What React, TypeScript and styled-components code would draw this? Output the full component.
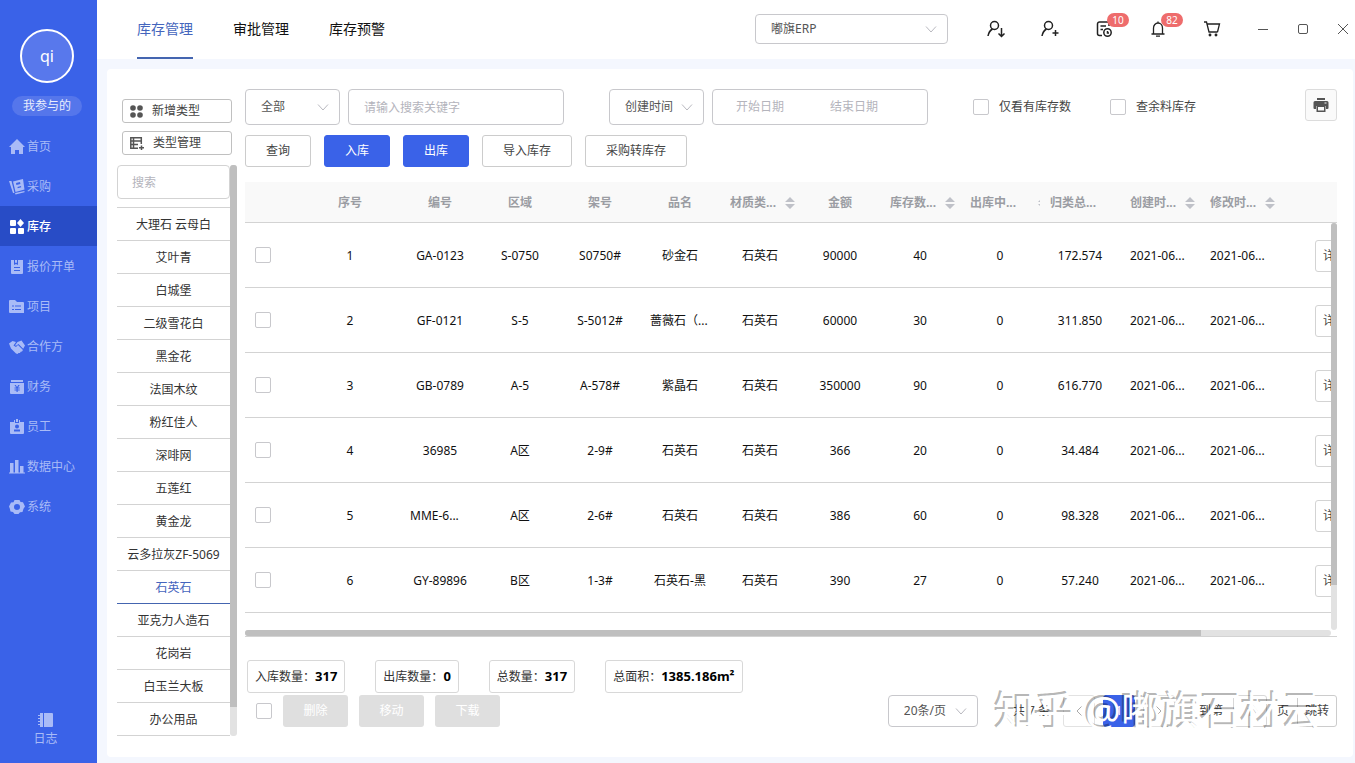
import React from "react";
import styled, { createGlobalStyle } from "styled-components";

const BLUE = "#3a62e8";
const LINE = "#d3d3d3";

const GlobalStyle = createGlobalStyle`
  *, *::before, *::after { box-sizing: border-box; }
  body {
    margin: 0;
    background: #f4f7fe;
    color: #333;
    font-family: "Noto Sans", "Noto Sans CJK SC", sans-serif;
    font-size: 12px;
    line-height: 16px;
  }
  button, input, select { font: inherit; color: inherit; margin: 0; }
  button { cursor: pointer; padding: 0; white-space: nowrap; }
  a { color: inherit; text-decoration: none; }
`;

/* ---------- frame ---------- */

const Shell = styled.div`
  display: flex;
  min-height: 100vh;
`;

const Sidebar = styled.aside`
  flex: 0 0 97px;
  display: flex;
  flex-direction: column;
  background: ${BLUE};
  color: #a9bbf7;
  padding: 29px 0 16px;
`;

const Avatar = styled.div`
  width: 54px;
  height: 54px;
  margin: 0 0 0 20px;
  border: 2px solid #fff;
  border-radius: 50%;
  background: #5878ec;
  color: #fff;
  font-size: 16px;
  display: flex;
  align-items: center;
  justify-content: center;
`;

const Pill = styled.button`
  width: 70px;
  height: 20px;
  margin: 13px 0 10px 12px;
  border: 0;
  border-radius: 10px;
  background: #5576eb;
  color: #e8edfd;
`;

const NavLink = styled.a<{ $active?: boolean }>`
  display: flex;
  align-items: center;
  gap: 2px;
  height: 40px;
  padding: 2px 0 0 9px;
  color: ${(p) => (p.$active ? "#fff" : "inherit")};
  background: ${(p) => (p.$active ? "#284cc6" : "transparent")};
  font-weight: ${(p) => (p.$active ? 500 : 400)};
`;

const LogLink = styled.a`
  display: flex;
  flex-direction: column;
  align-items: center;
  gap: 3px;
  margin-top: auto;
  padding-right: 6px;
`;

const Main = styled.div`
  flex: 1;
  min-width: 0;
  display: flex;
  flex-direction: column;
`;

const Header = styled.header`
  display: flex;
  align-items: center;
  justify-content: space-between;
  height: 59px;
  padding: 0 4px 0 40px;
  background: #fff;
`;

const Tabs = styled.nav`
  display: flex;
  align-self: stretch;
  gap: 40px;
`;

const Tab = styled.a<{ $active?: boolean }>`
  display: flex;
  align-items: center;
  font-size: 14px;
  color: ${(p) => (p.$active ? "#4465bd" : "#111")};
  border-bottom: 2px solid ${(p) => (p.$active ? "#4465b0" : "transparent")};
`;

const HeaderTools = styled.div`
  display: flex;
  align-items: center;
  padding-bottom: 2px;
`;

const SelectWrap = styled.span<{ $w: number; $h: number }>`
  position: relative;
  display: block;
  flex: none;
  width: ${(p) => p.$w}px;
  height: ${(p) => p.$h}px;
  svg {
    position: absolute;
    right: 11px;
    top: 50%;
    margin-top: -3px;
    pointer-events: none;
  }
`;

const NativeSelect = styled.select`
  appearance: none;
  width: 100%;
  height: 100%;
  padding: 0 16px 0 15px;
  border: 1px solid #c8c8cc;
  border-radius: 4px;
  background: #fff;
  color: #555;
`;

const HeaderIcons = styled.div`
  display: flex;
  gap: 30px;
  margin: 0 31px 0 36px;
`;

const IconButton = styled.button`
  position: relative;
  display: flex;
  align-items: center;
  justify-content: center;
  width: 24px;
  height: 24px;
  border: 0;
  background: none;
  color: #222;
`;

const WindowButton = styled(IconButton)`
  width: 16px;
  color: #555;
`;

const Badge = styled.span`
  position: absolute;
  left: 15px;
  top: -4px;
  width: 22px;
  height: 14px;
  border-radius: 7px;
  background: #ee6c6c;
  color: #fff;
  font-size: 10px;
  line-height: 14px;
  text-align: center;
`;

const WindowControls = styled.div`
  display: flex;
  gap: 24px;
`;

const Panel = styled.main`
  position: relative;
  flex: 1;
  display: flex;
  gap: 8px;
  margin: 10px 2px 6px 10px;
  padding: 20px 16px 21px 10px;
  border-radius: 4px;
  background: #fff;
`;

/* ---------- category column ---------- */

const Categories = styled.section`
  flex: 0 0 120px;
  display: flex;
  flex-direction: column;
  padding-top: 10px;
`;

const TypeButton = styled.button`
  display: flex;
  align-items: center;
  gap: 9px;
  width: 110px;
  height: 24px;
  margin: 0 0 8px 5px;
  padding-left: 7px;
  border: 1px solid #c0c0c0;
  border-radius: 3px;
  background: #fff;
  color: #444;
`;

const CategoryScroll = styled.div`
  display: flex;
  margin-top: 2px;
`;

const CategoryBody = styled.div`
  flex: 1;
  min-width: 0;
`;

const CategorySearch = styled.input`
  display: block;
  width: 100%;
  height: 34px;
  margin-bottom: 8px;
  padding: 0 14px;
  border: 1px solid ${LINE};
  border-radius: 4px;
  &::placeholder { color: #b4b4bc; opacity: 1; }
`;

const CategoryList = styled.ul`
  list-style: none;
  margin: 0;
  padding: 0;
  border-top: 1px solid ${LINE};
`;

const CategoryItem = styled.li<{ $active?: boolean }>`
  height: 33px;
  border-bottom: 1px solid ${(p) => (p.$active ? "#4465b0" : LINE)};
  color: ${(p) => (p.$active ? "#4465bd" : "#333")};
  text-align: center;
  line-height: 34px;
  white-space: nowrap;
`;

const Rail = styled.div`
  width: 7px;
  border-radius: 3px;
  background: #e2e2e2;
`;

const Thumb = styled.div<{ $size: string; $horizontal?: boolean }>`
  width: ${(p) => (p.$horizontal ? p.$size : "100%")};
  height: ${(p) => (p.$horizontal ? "100%" : p.$size)};
  border-radius: ${(p) => (p.$horizontal ? "3px 0 0 3px" : "3px 3px 0 0")};
  background: #bfbfbf;
`;

/* ---------- content column ---------- */

const Content = styled.section`
  flex: 1;
  min-width: 0;
`;

const Filters = styled.div`
  display: flex;
  align-items: center;
  height: 36px;
`;

const SearchBox = styled.input`
  width: 216px;
  height: 36px;
  margin: 0 45px 0 8px;
  padding: 0 15px;
  border: 1px solid #c8c8cc;
  border-radius: 4px;
  &::placeholder { color: #b4b4bc; opacity: 1; }
`;

const DateRange = styled.div`
  display: flex;
  align-items: center;
  width: 216px;
  height: 36px;
  margin: 0 45px 0 8px;
  padding-left: 23px;
  border: 1px solid #c8c8cc;
  border-radius: 4px;
`;

const DateInput = styled.input`
  width: 94px;
  padding: 0;
  border: 0;
  outline: 0;
  background: none;
  &::placeholder { color: #b4b4bc; opacity: 1; }
`;

const CheckLabel = styled.label`
  display: flex;
  align-items: center;
  gap: 10px;
  margin-right: 39px;
  color: #444;
`;

const Check = styled.input.attrs({ type: "checkbox" })`
  appearance: none;
  display: block;
  flex: none;
  width: 16px;
  height: 16px;
  border: 1px solid #c8c8cc;
  border-radius: 2px;
  background: #fff;
`;

const PrintButton = styled.button`
  display: flex;
  align-items: center;
  justify-content: center;
  align-self: flex-start;
  width: 32px;
  height: 32px;
  margin-left: auto;
  border: 1px solid #dcdcdc;
  border-radius: 3px;
  background: #fafafa;
  color: #555;
`;

const Actions = styled.div`
  display: flex;
  gap: 13px;
  margin: 10px 0 15px;
`;

const Button = styled.button<{ $primary?: boolean }>`
  height: 32px;
  padding: 0 20px;
  border: 1px solid ${(p) => (p.$primary ? BLUE : "#ccc")};
  border-radius: 3px;
  background: ${(p) => (p.$primary ? BLUE : "#fff")};
  color: ${(p) => (p.$primary ? "#fff" : "#444")};
`;

const TableBox = styled.div`
  position: relative;
  height: 455px;
  border-bottom: 1px solid ${LINE};
  overflow: hidden;
`;

const Table = styled.table`
  width: 1236px;
  table-layout: fixed;
  border-collapse: separate;
  border-spacing: 0;
`;

const Th = styled.th<{ $left?: boolean }>`
  position: relative;
  height: 41px;
  padding: 2px 10px 0;
  border-bottom: 1px solid ${LINE};
  background: #f9f9f9;
  color: #9b9da3;
  font-weight: 700;
  text-align: ${(p) => (p.$left ? "left" : "center")};
  white-space: nowrap;
`;

const Td = styled.td<{ $left?: boolean }>`
  height: 65px;
  padding: 2px 10px 0;
  border-bottom: 1px solid ${LINE};
  color: #111;
  text-align: ${(p) => (p.$left ? "left" : "center")};
  white-space: nowrap;
`;

const CheckTd = styled(Td)`
  padding-top: 0;
`;

const DetailTd = styled(Td)`
  padding-left: 35px;
  text-align: left;
`;

const DetailButton = styled.button`
  height: 32px;
  padding: 0 7px;
  border: 1px solid ${LINE};
  border-radius: 3px;
  background: #fff;
  color: #444;
`;

const Caret = styled.span<{ $clipped?: boolean }>`
  position: absolute;
  right: ${(p) => (p.$clipped ? 0 : 5)}px;
  top: 15px;
  width: ${(p) => (p.$clipped ? 2 : 10)}px;
  height: 12px;
  overflow: hidden;
  svg { display: block; }
`;

const VRail = styled(Rail)`
  position: absolute;
  right: 0;
  top: 41px;
  bottom: 6px;
  width: 6px;
`;

const HRail = styled(Rail)`
  position: absolute;
  left: 0;
  right: 6px;
  bottom: 0;
  width: auto;
  height: 6px;
`;

const Stats = styled.div`
  display: flex;
  gap: 30px;
  margin: 23px 0 0 2px;
`;

const Stat = styled.div`
  height: 33px;
  padding: 0 7px;
  border: 1px solid #d8d8d8;
  border-radius: 3px;
  line-height: 31px;
  white-space: nowrap;
  b { color: #000; font-size: 13px; }
`;

const Footer = styled.div`
  display: flex;
  align-items: center;
  gap: 11px;
  margin-top: 2px;
  padding-left: 11px;
`;

const DisabledButton = styled.button`
  width: 65px;
  height: 32px;
  border: 0;
  border-radius: 3px;
  background: #dfdfdf;
  color: #fff;
`;

const Pager = styled.div`
  display: flex;
  align-items: center;
  margin-left: auto;
  color: #444;
`;

const Total = styled.span`
  margin: 0 13px 0 35px;
`;

const PageButton = styled.button<{ $current?: boolean }>`
  display: flex;
  align-items: center;
  justify-content: center;
  width: 32px;
  height: 32px;
  margin-right: 8px;
  border: 1px solid ${(p) => (p.$current ? BLUE : "#e2e2e2")};
  border-radius: 3px;
  background: ${(p) => (p.$current ? BLUE : "#fff")};
  color: ${(p) => (p.$current ? "#fff" : "#aaa")};
`;

const JumpLabel = styled.label`
  display: flex;
  align-items: center;
  gap: 10px;
  margin-left: 16px;
`;

const JumpInput = styled.input`
  width: 34px;
  height: 32px;
  padding: 0;
  border: 1px solid #d8d8d8;
  border-radius: 3px;
  text-align: center;
`;

const JumpButton = styled.button`
  width: 40px;
  height: 32px;
  margin-left: 8px;
  border: 1px solid #ccc;
  border-radius: 3px;
  background: #fff;
`;

const Watermark = styled.div`
  position: absolute;
  right: 32px;
  bottom: 20px;
  color: #fff;
  font-size: 40px;
  line-height: 52px;
  white-space: nowrap;
  text-shadow: -2px -2px 0 rgba(0, 0, 0, 0.3);
  pointer-events: none;
`;

/* ---------- icons ---------- */

const NAV_ICONS: Record<string, React.ReactNode> = {
  home: <path d="M8 0 16 8h-2v7h-4v-4H6v4H2V8H0z" />,
  cart: (
    <>
      <path d="M0 2h2.500l3 12H4zM6 14l9.500-2v1.300L6.500 15.500z" />
      <path fillRule="evenodd" d="M4 2.500 14 0l1.500 10.500L6.500 13zM7 4l.4 2 4-1-.4-2zM8.500 8l.2 1.200 3.500-.9L12 7.100z" />
    </>
  ),
  stock: (
    <>
      <rect x="1" y="1" width="6" height="6" rx="1" />
      <rect x="1" y="9" width="6" height="6" rx="1" />
      <rect x="9" y="9" width="6" height="6" rx="1" />
      <path d="M11.500 0 15 4l-3.500 4L8 4z" />
    </>
  ),
  quote: (
    <path fillRule="evenodd" d="M2 1h3v5l2-1 2 1V1h5v13a1 1 0 0 1-1 1H3a1 1 0 0 1-1-1zM5 8v1h6V8zM5 11v1h6v-1zM6 1h2v3L7 3.500 6 4z" />
  ),
  project: (
    <path fillRule="evenodd" d="M1 1h5l2 2h6a1 1 0 0 1 1 1v10H1a1 1 0 0 1-1-1V2a1 1 0 0 1 1-1zM3 6.500v1h2v-1zM6 6.500v1h6v-1zM3 10v1h2v-1zM6 10v1h6v-1z" />
  ),
  partner: (
    <>
      <path d="M0 4.500 3.500 2 7 3 4.500 6.500 7 8l2-2 5 5-1 1.500-1.300.2-.7 1.200-1.500.1L8.500 15 7 14.500 2 9.500z" />
      <path d="M8.500 3 12.500 1.500 16 6.500l-1.800 3.300L9.500 5 7 6.800 6 6.200z" />
    </>
  ),
  finance: (
    <path fillRule="evenodd" d="M2 1h12v2H2zM1 4h14v10a1 1 0 0 1-1 1H2a1 1 0 0 1-1-1zM5.500 6l1.800 2.500H5.500v1h2v1h-2v1h2V13h1.200v-1.500h2v-1h-2v-1h2v-1H9L10.700 6H9.300L8 8 6.800 6z" />
  ),
  staff: (
    <path fillRule="evenodd" d="M1 3h4V1h1v3h4V1h1v2h4v11a1 1 0 0 1-1 1H2a1 1 0 0 1-1-1zM7 0h2v3H7zM8 5.500a2 2 0 1 0 0 4 2 2 0 0 0 0-4zM5 10.500V12.500h6v-2z" />
  ),
  data: (
    <>
      <rect x="1" y="4" width="3.500" height="10" />
      <rect x="6" y="1" width="3.500" height="13" />
      <rect x="11" y="7" width="3.500" height="7" />
      <rect x="0" y="13.500" width="16" height="1" />
    </>
  ),
  system: (
    <path fillRule="evenodd" d="M5.500 1h5l1 2 2.500.3L16 7.500l-1.500 2.200L13.500 13l-2.500.2L9.500 15h-4L4 13l-2.500-.5L.8 9.500 0 7.500 2 3.500l2.500-.3zM8 5a3 3 0 1 0 0 6 3 3 0 0 0 0-6z" />
  ),
  log: (
    <path fillRule="evenodd" d="M2 1h3v14H2v-2H0v-1h2v-2H0V9h2V7H0V6h2V4H0V3h2zM6 1h8a1 1 0 0 1 1 1v12a1 1 0 0 1-1 1H6z" />
  ),
};

const NavIcon = ({ name }: { name: string }) => (
  <svg width="16" height="16" viewBox="0 0 16 16" fill="currentColor" aria-hidden="true">
    {NAV_ICONS[name]}
  </svg>
);

const Line = ({ size = 20, w = 1.5, children }: { size?: number; w?: number; children: React.ReactNode }) => (
  <svg width={size} height={size} viewBox={`0 0 ${size} ${size}`} fill="none" stroke="currentColor" strokeWidth={w} aria-hidden="true">
    {children}
  </svg>
);

const Chevron = () => (
  <svg width="12" height="7" viewBox="0 0 12 7" fill="none" stroke="#b8b8bf" aria-hidden="true">
    <path d="M1 .5 6 6l5-5.500" />
  </svg>
);

const SortCaret = () => (
  <svg width="10" height="12" viewBox="0 0 10 12" fill="#bfc1c8" aria-hidden="true">
    <path d="M0 5 5 0l5 5zM0 7h10l-5 5z" />
  </svg>
);

/* ---------- data ---------- */

const NAV = [
  ["home", "首页"], ["cart", "采购"], ["stock", "库存"], ["quote", "报价开单"], ["project", "项目"],
  ["partner", "合作方"], ["finance", "财务"], ["staff", "员工"], ["data", "数据中心"], ["system", "系统"],
];

const CATEGORIES = [
  "大理石 云母白", "艾叶青", "白城堡", "二级雪花白", "黑金花", "法国木纹", "粉红佳人", "深啡网",
  "五莲红", "黄金龙", "云多拉灰ZF-5069", "石英石", "亚克力人造石", "花岗岩", "白玉兰大板", "办公用品",
];

const COLUMNS: { label: string; sort?: boolean; clipped?: boolean }[] = [
  { label: "序号" }, { label: "编号" }, { label: "区域" }, { label: "架号" }, { label: "品名" },
  { label: "材质类...", sort: true }, { label: "金额" }, { label: "库存数...", sort: true },
  { label: "出库中...", sort: true, clipped: true }, { label: "归类总..." },
  { label: "创建时...", sort: true }, { label: "修改时...", sort: true },
];

const DATE = "2021-06...";
const ROWS = [
  ["1", "GA-0123", "S-0750", "S0750#", "砂金石", "石英石", "90000", "40", "0", "172.574", DATE, DATE],
  ["2", "GF-0121", "S-5", "S-5012#", "蔷薇石（...", "石英石", "60000", "30", "0", "311.850", DATE, DATE],
  ["3", "GB-0789", "A-5", "A-578#", "紫晶石", "石英石", "350000", "90", "0", "616.770", DATE, DATE],
  ["4", "36985", "A区", "2-9#", "石英石", "石英石", "366", "20", "0", "34.484", DATE, DATE],
  ["5", "MME-6...", "A区", "2-6#", "石英石", "石英石", "386", "60", "0", "98.328", DATE, DATE],
  ["6", "GY-89896", "B区", "1-3#", "石英石-黑", "石英石", "390", "27", "0", "57.240", DATE, DATE],
];

const STATS = [["入库数量", "317"], ["出库数量", "0"], ["总数量", "317"], ["总面积", "1385.186m²"]];

const Select = ({ w, h, label, value }: { w: number; h: number; label: string; value: string }) => (
  <SelectWrap $w={w} $h={h}>
    <NativeSelect aria-label={label} defaultValue={value}>
      <option>{value}</option>
    </NativeSelect>
    <Chevron />
  </SelectWrap>
);

export default function App() {
  return (
    <Shell>
      <GlobalStyle />
      <Sidebar>
        <Avatar>qi</Avatar>
        <Pill>我参与的</Pill>
        <nav>
          {NAV.map(([icon, text]) => (
            <NavLink key={icon} href="#" $active={icon === "stock"}>
              <NavIcon name={icon} />
              {text}
            </NavLink>
          ))}
        </nav>
        <LogLink href="#">
          <NavIcon name="log" />
          日志
        </LogLink>
      </Sidebar>

      <Main>
        <Header>
          <Tabs>
            <Tab href="#" $active>库存管理</Tab>
            <Tab href="#">审批管理</Tab>
            <Tab href="#">库存预警</Tab>
          </Tabs>
          <HeaderTools>
            <Select w={193} h={30} label="公司" value="嘟旗ERP" />
            <HeaderIcons>
              <IconButton aria-label="转交">
                <Line>
                  <circle cx="8.500" cy="6.500" r="4" />
                  <path d="M6.500 10C4 11.500 2.500 14 2 17M15.500 9v8M12.500 14.500l3 3 3-3" />
                </Line>
              </IconButton>
              <IconButton aria-label="添加成员">
                <Line>
                  <circle cx="8.500" cy="6.500" r="4" />
                  <path d="M6.500 10C4 11.500 2.500 14 2 17M15.500 11v6M12.500 14h6" />
                </Line>
              </IconButton>
              <IconButton aria-label="待办">
                <Line>
                  <path d="M8 16.500H5.500a2 2 0 0 1-2-2V5a2 2 0 0 1 2-2H13a2 2 0 0 1 2 2v2M6.500 7H12M6.500 10.500H9" />
                  <circle cx="13.500" cy="13.500" r="3.700" />
                  <path d="M13.500 12v2H15" />
                </Line>
                <Badge>10</Badge>
              </IconButton>
              <IconButton aria-label="通知">
                <Line w={1.3}>
                  <path d="M5.500 14.500V9a4.500 5 0 0 1 9 0v5.500M3.500 15h13M10 4V2.500M8 17.200h4" />
                </Line>
                <Badge>82</Badge>
              </IconButton>
              <IconButton aria-label="购物车">
                <Line w={1.3}>
                  <path d="M2 3h2.500l2.500 10h8.500M5 5h12.500l-2 8" />
                  <circle cx="8" cy="16" r=".8" />
                  <circle cx="14" cy="16" r=".8" />
                </Line>
              </IconButton>
            </HeaderIcons>
            <WindowControls>
              <WindowButton aria-label="最小化">
                <Line size={12} w={1}><path d="M1 6.500h10" /></Line>
              </WindowButton>
              <WindowButton aria-label="最大化">
                <Line size={12} w={1}><rect x="1.500" y="1.500" width="9" height="9" rx="1.500" /></Line>
              </WindowButton>
              <WindowButton aria-label="关闭">
                <Line size={12} w={1}><path d="M1 1l10 10M11 1 1 11" /></Line>
              </WindowButton>
            </WindowControls>
          </HeaderTools>
        </Header>

        <Panel>
          <Categories>
            <TypeButton>
              <svg width="13" height="13" viewBox="0 0 13 13" fill="#555" aria-hidden="true">
                <circle cx="3" cy="3" r="2.800" /><circle cx="10" cy="3" r="2.800" />
                <circle cx="3" cy="10" r="2.800" /><circle cx="10" cy="10" r="2.800" />
              </svg>
              新增类型
            </TypeButton>
            <TypeButton>
              <svg width="14" height="13" viewBox="0 0 14 13" fill="none" stroke="#555" strokeWidth="1.500" aria-hidden="true">
                <path d="M8 11.200H.8V.8h10.500V7M3.500 1v10M1 4h10M1 7.500h7M11.500 8.500v4.500M9 10.700h5" />
              </svg>
              类型管理
            </TypeButton>
            <CategoryScroll>
              <CategoryBody>
                <CategorySearch placeholder="搜索" aria-label="搜索类型" />
                <CategoryList>
                  {CATEGORIES.map((c) => (
                    <CategoryItem key={c} $active={c === "石英石"}>{c}</CategoryItem>
                  ))}
                </CategoryList>
              </CategoryBody>
              <Rail><Thumb $size="95%" /></Rail>
            </CategoryScroll>
          </Categories>

          <Content>
            <Filters>
              <Select w={95} h={36} label="范围" value="全部" />
              <SearchBox placeholder="请输入搜索关键字" aria-label="关键字" />
              <Select w={95} h={36} label="时间类型" value="创建时间" />
              <DateRange>
                <DateInput placeholder="开始日期" aria-label="开始日期" />
                <DateInput placeholder="结束日期" aria-label="结束日期" />
              </DateRange>
              <CheckLabel><Check />仅看有库存数</CheckLabel>
              <CheckLabel><Check />查余料库存</CheckLabel>
              <PrintButton aria-label="打印">
                <svg width="16" height="16" viewBox="0 0 16 16" fill="currentColor" aria-hidden="true">
                  <path fillRule="evenodd" d="M4 1h8v2H4zM2 4h12a1.500 1.500 0 0 1 1.500 1.500V11a1 1 0 0 1-1 1H13V9H3v3H1.500a1 1 0 0 1-1-1V5.500A1.500 1.500 0 0 1 2 4zM11.500 5.500v1h2v-1z" />
                  <path fillRule="evenodd" d="M3.500 9h9v6h-9zM5 10v3.500h6V10z" />
                </svg>
              </PrintButton>
            </Filters>

            <Actions>
              <Button>查询</Button>
              <Button $primary>入库</Button>
              <Button $primary>出库</Button>
              <Button>导入库存</Button>
              <Button>采购转库存</Button>
            </Actions>

            <TableBox>
              <Table>
                <colgroup>
                  <col style={{ width: 55 }} />
                  {COLUMNS.map((c, i) => (
                    <col key={c.label} style={{ width: i === 0 ? 100 : 80 }} />
                  ))}
                  <col />
                </colgroup>
                <thead>
                  <tr>
                    <Th />
                    {COLUMNS.map((c) => (
                      <Th key={c.label} $left={c.label.endsWith("...")}>
                        {c.label}
                        {c.sort && <Caret $clipped={c.clipped}><SortCaret /></Caret>}
                      </Th>
                    ))}
                    <Th />
                  </tr>
                </thead>
                <tbody>
                  {ROWS.map((row) => (
                    <tr key={row[0]}>
                      <CheckTd><Check aria-label={`选择 ${row[1]}`} /></CheckTd>
                      {row.map((cell, i) => (
                        <Td key={i} $left={cell.endsWith("...")}>{cell}</Td>
                      ))}
                      <DetailTd><DetailButton>详情</DetailButton></DetailTd>
                    </tr>
                  ))}
                </tbody>
              </Table>
              <VRail><Thumb $size="89%" /></VRail>
              <HRail><Thumb $horizontal $size="88%" /></HRail>
            </TableBox>

            <Stats>
              {STATS.map(([k, v]) => (
                <Stat key={k}>{k}：<b>{v}</b></Stat>
              ))}
            </Stats>

            <Footer>
              <Check aria-label="全选" />
              <DisabledButton disabled>删除</DisabledButton>
              <DisabledButton disabled>移动</DisabledButton>
              <DisabledButton disabled>下载</DisabledButton>
              <Pager>
                <Select w={90} h={32} label="每页条数" value="20条/页" />
                <Total>共 7 条</Total>
                <PageButton aria-label="上一页">
                  <svg width="6" height="10" viewBox="0 0 6 10" fill="none" stroke="currentColor" aria-hidden="true"><path d="M5.500.5 1 5l4.500 4.500" /></svg>
                </PageButton>
                <PageButton $current>1</PageButton>
                <PageButton aria-label="下一页">
                  <svg width="6" height="10" viewBox="0 0 6 10" fill="none" stroke="currentColor" aria-hidden="true"><path d="M.5.5 5 5 .5 9.500" /></svg>
                </PageButton>
                <JumpLabel>
                  到第
                  <JumpInput defaultValue="1" />
                  页
                </JumpLabel>
                <JumpButton>跳转</JumpButton>
              </Pager>
            </Footer>
          </Content>
          <Watermark>知乎 @嘟旗石材云</Watermark>
        </Panel>
      </Main>
    </Shell>
  );
}
